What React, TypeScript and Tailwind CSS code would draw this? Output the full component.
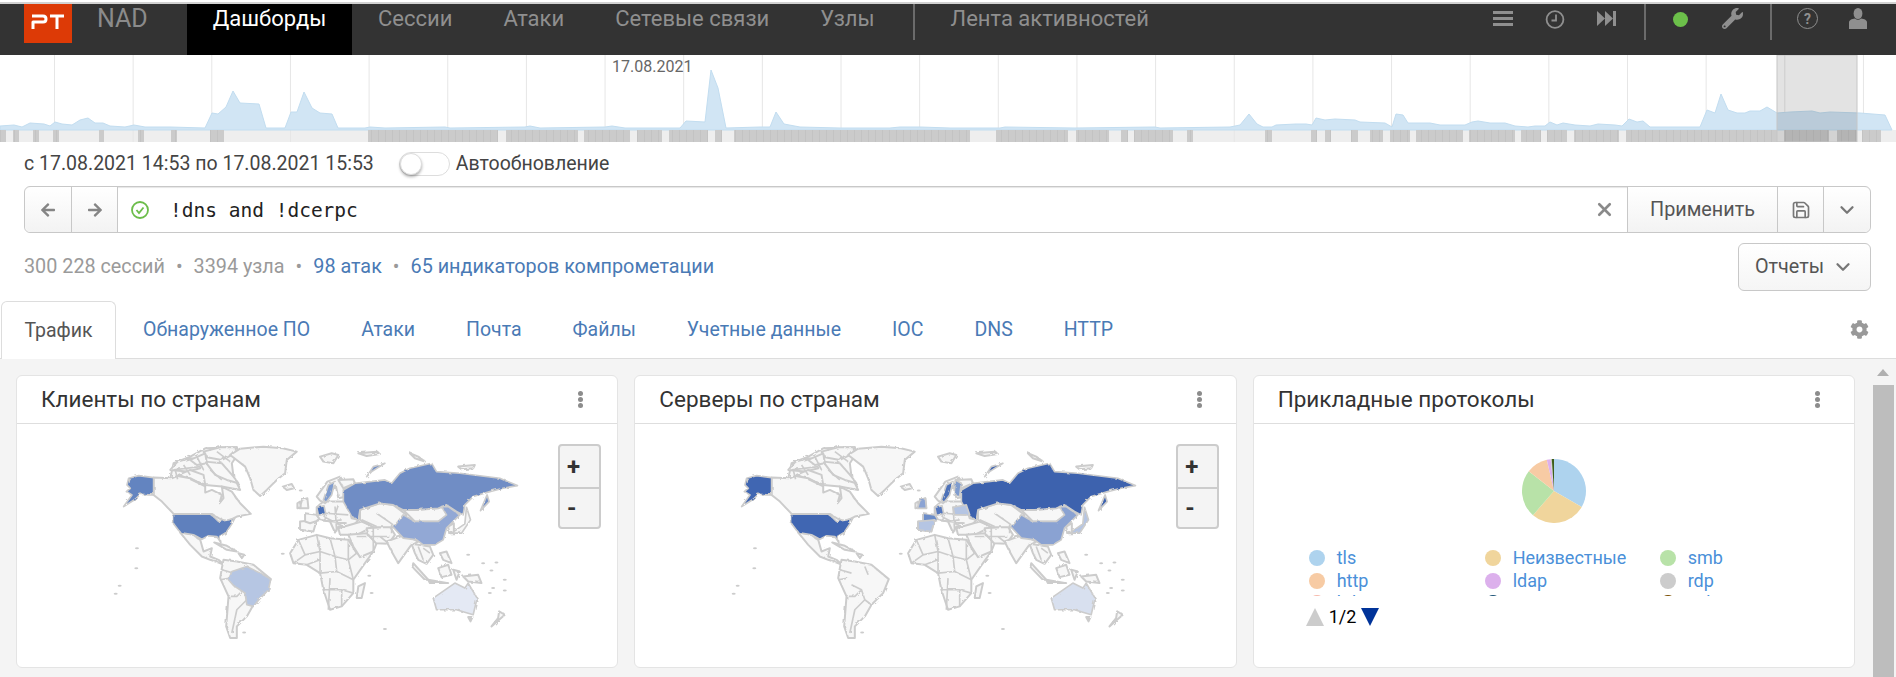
import React from 'react';
import { ChevronDown, Save, X } from 'lucide-react';
import { FaArrowLeft, FaArrowRight, FaCog, FaWrench } from 'react-icons/fa';

const chartPoints: [number, number][] = [
  [0,126],[14,125],[22,127],[30,123],[44,124],[50,126],[55,122],[62,124],[72,125],[80,120],[88,118],[95,123],[103,123],[110,126],[125,127],[134,125],[145,127],[170,127],[205,128],[212,113],[218,114],[226,107],[233,91],[240,103],[259,104],[266,128],[285,128],[291,112],[297,112],[304,92],[312,108],[320,113],[332,114],[338,128],[365,128],[370,127],[385,128],[445,127],[450,128],[525,127],[530,126],[540,128],[605,127],[612,126],[625,128],[680,128],[686,121],[705,122],[711,70],[718,88],[726,128],[760,127],[770,127],[776,112],[784,124],[800,127],[840,128],[890,128],[900,127],[920,127],[950,128],[1000,128],[1005,127],[1075,128],[1155,127],[1160,128],[1230,127],[1240,125],[1249,114],[1257,124],[1263,127],[1272,127],[1276,125],[1296,124],[1306,124],[1312,125],[1316,118],[1325,120],[1335,119],[1355,120],[1360,122],[1385,123],[1392,127],[1396,114],[1403,115],[1408,123],[1430,123],[1440,125],[1465,125],[1472,122],[1478,121],[1490,123],[1505,123],[1515,126],[1528,127],[1535,126],[1545,126],[1550,122],[1557,125],[1563,123],[1575,125],[1590,126],[1598,124],[1615,125],[1622,126],[1629,119],[1637,122],[1643,121],[1650,127],[1700,127],[1707,110],[1715,113],[1721,94],[1728,110],[1737,113],[1745,113],[1750,111],[1760,111],[1767,107],[1777,113],[1790,112],[1812,111],[1820,113],[1830,112],[1860,113],[1885,115],[1892,130],
];

const stripSegments: [number, number][] = [
  [0,6],[13,19],[33,39],[53,59],[99,104],[138,144],[171,177],[210,224],[368,498],[506,578],[584,630],[637,662],[669,708],[715,722],[734,970],[996,1068],[1076,1109],[1121,1128],[1134,1173],[1187,1193],[1265,1272],[1311,1317],[1325,1331],[1351,1358],[1370,1383],[1390,1410],[1416,1463],[1469,1515],[1521,1541],[1547,1567],[1574,1619],[1626,1777],[1784,1829],[1837,1857],[1862,1881],
];

const gridLines = Array.from({ length: 24 }, (_, i) => 54.5 + i * 78.65);

const navItems = ['Сессии', 'Атаки', 'Сетевые связи', 'Узлы'];
const tabs = ['Обнаруженное ПО', 'Атаки', 'Почта', 'Файлы', 'Учетные данные', 'IOC', 'DNS', 'HTTP'];

const land = [
  // canadian arctic, backing shape first so the islands read as one dense mass
  'M240,175 L250,130 L300,110 L345,85 L440,82 L445,100 L425,130 L430,170 L450,210 L395,200 L345,195 L300,175Z',
  'M240,150 L262,125 L300,115 L335,120 L330,145 L290,155Z',
  'M340,95 L390,82 L440,82 L420,108 L395,120 L350,112Z',
  'M345,125 L395,130 L430,170 L445,190 L410,180 L375,165Z',
  'M265,165 L300,150 L340,165 L345,195 L300,178Z',
  'M300,120 L345,100 L350,130 L320,135Z',
  // greenland, iceland
  'M420,105 L450,86 L520,80 L578,85 L620,95 L590,120 L585,160 L560,180 L530,210 L510,228 L490,210 L480,175 L465,140Z',
  'M578,200 L605,192 L612,205 L590,210Z',
  // canada
  'M190,173 L245,175 L262,168 L300,175 L320,185 L345,195 L345,218 L365,210 L395,225 L388,250 L400,235 L395,200 L425,215 L450,250 L482,282 L440,290 L410,305 L385,295 L365,282 L250,282 L215,245 L190,225Z',
  // mexico, central america
  'M270,338 L310,345 L330,360 L340,395 L365,385 L360,410 L385,420 L402,435 L385,428 L360,420 L335,410 L300,375Z',
  'M372,368 L410,378 L440,395 L410,390Z',
  'M445,400 L462,405 L455,415Z',
  // south america
  'M400,420 L440,425 L490,435 L542,478 L525,520 L490,555 L470,590 L440,620 L440,655 L420,655 L408,620 L415,530 L390,475 L395,445Z',
  // africa
  'M600,400 L625,360 L680,345 L720,355 L775,360 L800,400 L850,395 L825,430 L790,480 L790,520 L755,560 L720,570 L700,510 L690,460 L650,435 L610,430Z',
  'M805,500 L825,490 L815,535 L800,535Z',
  // europe
  'M630,305 L680,300 L670,335 L630,330Z',
  'M645,280 L680,285 L690,300 L660,310 L645,305Z',
  'M680,262 L700,245 L760,245 L775,260 L785,295 L805,300 L790,318 L745,320 L735,338 L720,305 L690,300 L680,285Z',
  'M628,265 L636,240 L652,235 L655,265Z',
  'M622,250 L630,245 L632,262 L622,265Z',
  'M680,230 L712,185 L750,170 L765,190 L760,232 L745,235 L738,200 L720,215 L705,250 L690,242Z',
  'M690,110 L725,100 L745,105 L730,130 L700,125Z',
  'M805,100 L860,95 L870,102 L830,108Z',
  'M745,180 L790,178 L795,190 L760,205Z',
  // arctic russia
  'M960,100 L985,110 L1005,125 L975,115Z',
  'M1105,140 L1155,135 L1150,145 L1115,148Z',
  // turkey, arabia, iran, central asia
  'M745,325 L815,305 L850,320 L800,345 L750,345Z',
  'M775,345 L830,340 L860,370 L850,395 L810,412 L790,380Z',
  'M830,325 L900,320 L915,345 L895,372 L858,370 L835,345Z',
  'M810,270 L870,250 L910,255 L950,285 L912,322 L850,322 L810,300Z',
  'M940,270 L980,270 L1045,265 L1070,255 L1075,285 L1045,305 L975,305Z',
  // south asia, south-east asia
  'M890,365 L945,345 L985,365 L962,378 L925,430 L905,395Z',
  'M965,372 L1020,380 L1030,405 L1010,432 L985,420 L975,400Z',
  'M970,430 L1015,480 L1005,480 L968,442Z',
  'M1015,480 L1075,490 L1020,490Z',
  'M1045,445 L1075,435 L1085,465 L1055,472Z',
  'M1090,450 L1110,455 L1100,480Z',
  'M1050,400 L1070,395 L1085,430 L1060,420Z',
  'M1120,470 L1165,465 L1175,490 L1135,485Z',
  // korea
  'M1075,320 L1092,310 L1092,340 L1078,340Z',
  // oceania
  'M1135,592 L1148,592 L1142,605Z',
  'M1205,620 L1245,585 L1228,575 L1225,595Z',
];

const borders = [
  // south america
  'M395,450 L430,460 M420,475 L390,480 M430,495 L460,510 L440,530 L420,530 M460,510 L470,540 L440,570 L425,640 M470,540 L490,555 M470,440 L480,465',
  // africa
  'M625,360 L645,405 L610,430 M680,345 L690,395 L645,405 M720,355 L735,410 L690,395 M775,360 L775,420 L735,410 M800,400 L775,420 L790,480 M690,460 L740,455 L735,410 M740,455 L790,480 M700,510 L755,510 L790,520 M720,475 L715,570 M755,510 L755,560 M650,435 L690,420 M690,395 L690,460',
  // europe
  'M700,258 L705,300 M735,260 L740,335 M705,280 L775,285 M680,300 L770,310 M720,305 L755,300 M700,290 L760,320 M735,285 L745,255',
  // middle east, central asia
  'M850,320 L850,395 M800,350 L900,350 M815,300 L860,320 M860,280 L910,315 M905,340 L905,315 M870,350 L895,370',
  // se asia
  'M985,380 L1000,420 M1000,385 L1020,400',
  // canada
  'M280,135 L300,165 M360,150 L395,180 M400,110 L385,130 M262,178 L255,150 M300,178 L345,200 M320,110 L340,150 M380,95 L420,125 M250,150 L330,140',
];

const regions: Record<string, string> = {
  alaska: 'M190,173 L145,167 L115,175 L110,195 L120,205 L108,215 L125,225 L100,260 L135,238 L150,223 L175,225 L190,225Z',
  usa: 'M250,283 L360,283 L375,295 L385,305 L415,300 L434,295 L425,312 L408,338 L388,350 L392,368 L380,350 L355,348 L335,358 L310,345 L270,338 L250,312Z',
  brazil: 'M425,455 L470,440 L510,460 L542,478 L535,510 L510,535 L490,560 L470,555 L465,520 L430,497 L415,480Z',
  russia: 'M760,245 L760,210 L795,190 L840,185 L885,180 L905,190 L930,160 L960,145 L1025,130 L1040,155 L1110,160 L1230,175 L1283,197 L1240,205 L1200,215 L1150,230 L1125,255 L1120,285 L1100,275 L1070,255 L1045,265 L980,270 L940,270 L910,255 L870,250 L810,270 L805,300 L785,290Z',
  novaya: 'M830,170 L850,140 L885,130 L845,155Z',
  china: 'M910,322 L940,285 L975,305 L1045,305 L1070,285 L1055,260 L1075,260 L1110,285 L1085,310 L1070,325 L1060,360 L1035,375 L1000,375 L980,360 L940,355Z',
  australia: 'M1030,535 L1095,490 L1125,505 L1135,490 L1162,535 L1150,585 L1100,570 L1040,570Z',
  sakhalin: 'M1172,272 L1192,225 L1198,245Z',
  sweden: 'M715,195 L735,185 L725,225 L708,248 L700,240Z',
  finland: 'M742,180 L760,190 L755,228 L738,225Z',
  germany: 'M680,262 L702,258 L707,282 L685,286Z',
  france: 'M645,280 L680,285 L690,300 L660,310 L645,305Z',
  uk: 'M628,265 L636,240 L652,235 L655,265Z',
  spain: 'M630,305 L680,300 L670,335 L630,330Z',
  ukraine: 'M735,262 L775,255 L785,285 L740,285Z',
  japan: 'M1085,340 L1125,312 L1130,262 L1142,300 L1115,340Z',
};

const islets = [[140,385],[138,445],[88,498],[76,522],[578,402],[845,520],[885,628],[462,638],[1135,405],[1180,430],[1220,428],[1205,452],[1245,480],[1210,505],[1200,520],[1245,512],[632,212],[838,468]];

const WorldMap: React.FC<{ id: string; fills: Record<string, string> }> = ({ id, fills }) => (
  <svg viewBox="0 30 1560 700" width={520} height={233} className="block">
    <defs>
      <filter id={id} filterUnits="userSpaceOnUse" x="0" y="0" width="1560" height="750" colorInterpolationFilters="sRGB">
        <feTurbulence type="fractalNoise" baseFrequency="0.07" numOctaves="2" seed="4" />
        <feDisplacementMap in="SourceGraphic" scale="8" />
      </filter>
    </defs>
    <g stroke="#cccccc" strokeWidth={6} strokeLinejoin="round" fill="#f7f7f7" filter={`url(#${id})`}>
      {land.map((d, i) => <path key={i} d={d} />)}
      <path d={borders.join(' ')} fill="none" strokeWidth={5} />
      {Object.keys(fills).map((r) => <path key={r} d={regions[r]} fill={fills[r]} strokeWidth={5} />)}
    </g>
    <g fill="#cccccc">
      {islets.map(([x, y], i) => <ellipse key={i} cx={x} cy={y} rx={6} ry={3} />)}
    </g>
  </svg>
);

const polar = (deg: number, r: number) => {
  const a = ((deg - 90) * Math.PI) / 180;
  return [32 + r * Math.cos(a), 32 + r * Math.sin(a)];
};

const slices: [number, number, string][] = [
  [0, 120, '#aed3ee'],
  [120, 221, '#f0d59c'],
  [221, 308, '#b8e2a8'],
  [308, 347, '#f7cba4'],
  [347, 354, '#dcb0ec'],
  [354, 356, '#cccccc'],
  [356, 360, '#3f5e1a'],
];

const PieChart = () => (
  <svg width={64} height={64} viewBox="0 0 64 64">
    {slices.map(([from, to, color]) => {
      const [x1, y1] = polar(from, 32);
      const [x2, y2] = polar(to, 32);
      return <path key={from} d={`M32,32 L${x1},${y1} A32,32 0 0 1 ${x2},${y2}Z`} fill={color} />;
    })}
  </svg>
);

const legend: [string, string][] = [
  ['tls', '#aed3ee'], ['Неизвестные', '#f0d59c'], ['smb', '#b8e2a8'],
  ['http', '#f7cba4'], ['ldap', '#dcb0ec'], ['rdp', '#cccccc'],
  ['krb5', '#f7b9ab'], ['ms-rpc-tcp', '#1a5276'], ['ssh', '#7a4d00'],
];

const Card: React.FC<{ title: string; children: React.ReactNode }> = ({ title, children }) => (
  <div className="relative h-[293px] overflow-hidden rounded-md border border-[#e4e4e4] bg-white">
    <div className="flex h-[48px] items-center justify-between border-b border-[#dedede] pl-[24px] pr-[34px]">
      <span className="text-[22.5px] text-[#333333]">{title}</span>
      <span className="flex flex-col gap-[1px]">
        <i className="block h-[5px] w-[5px] rounded-full bg-[#8c8c8c]" />
        <i className="block h-[5px] w-[5px] rounded-full bg-[#8c8c8c]" />
        <i className="block h-[5px] w-[5px] rounded-full bg-[#8c8c8c]" />
      </span>
    </div>
    {children}
  </div>
);

const ZoomButtons = () => (
  <div className="absolute left-[541px] top-[68px] flex h-[85px] w-[43px] flex-col rounded border-2 border-[#cccccc] bg-[#f4f4f4] text-[#333333]">
    <span className="flex h-[41px] items-center pl-[7px] text-[24px] font-bold leading-none">+</span>
    <span className="flex flex-1 items-center border-t-2 border-[#cccccc] pl-[7px] text-[24px] font-bold leading-none">-</span>
  </div>
);

const Sep: React.FC<{ className: string }> = ({ className }) => <span className={`h-[36px] w-[2px] bg-[#6b6b6b] ${className}`} />;

export default function App() {
  const area = `M0,130 ${chartPoints.map(([x, y]) => `L${x},${y}`).join(' ')} L1892,130Z`;

  return (
    <div className="flex h-[677px] w-[1896px] flex-col overflow-hidden bg-white font-['Roboto',sans-serif]">
      <div className="h-[4px] border-b-2 border-[#d2d2d2] bg-white" />

      <header className="flex h-[51px] shrink-0 items-start bg-[#333333]">
        <div className="ml-[24px] flex h-[39px] w-[48px] items-center justify-center bg-[#dd3a06] pb-[4px]">
          <svg width="34" height="16" viewBox="0 0 34 16" fill="none" stroke="#ffffff" strokeWidth="3" strokeLinejoin="round">
            <path d="M2,15 V8 H12 Q15,8 15,5 Q15,2 12,2 H1" />
            <path d="M19,2 H33 M26,2 V15" />
          </svg>
        </div>
        <span className="ml-[25px] w-[90px] text-[25px] leading-[30px] text-[#8b8b8b]">NAD</span>
        <span className="flex h-[51px] w-[165px] justify-center bg-black text-[22px] leading-[30px] text-white">Дашборды</span>
        <nav className="flex items-start pl-[26px] text-[22px] leading-[30px] text-[#8f8f8f]">
          <div className="flex gap-[51px]">
            {navItems.map((item) => <span key={item}>{item}</span>)}
          </div>
          <Sep className="ml-[38px]" />
          <span className="ml-[36px]">Лента активностей</span>
        </nav>
        <div className="ml-auto flex items-start text-[#8f8f8f]">
          <span className="mt-[7px] flex w-[20px] flex-col gap-[3px]">
            <i className="block h-[3px] bg-[#8f8f8f]" />
            <i className="block h-[3px] bg-[#8f8f8f]" />
            <i className="block h-[3px] bg-[#8f8f8f]" />
          </span>
          <svg className="ml-[32px] mt-[6px]" width="20" height="19" viewBox="0 0 20 19" fill="none" stroke="#8f8f8f" strokeWidth="1.8">
            <circle cx="10" cy="9.5" r="8.4" />
            <path d="M11,4.5 V10.5 H6.5" />
          </svg>
          <svg className="ml-[32px] mt-[7px]" width="19" height="15" viewBox="0 0 19 15" fill="#8f8f8f">
            <path d="M0,0 L8,7.5 L0,15Z M8,0 L16,7.5 L8,15Z" />
            <rect x="16" y="0" width="3" height="15" />
          </svg>
          <Sep className="ml-[28px]" />
          <span className="ml-[27px] mt-[8px] h-[15px] w-[15px] rounded-full bg-[#6cc04a]" />
          <FaWrench className="ml-[34px] mt-[4px]" size={21} />
          <Sep className="ml-[27px]" />
          <span className="ml-[25px] mt-[4px] flex h-[21px] w-[21px] items-center justify-center rounded-full border-[1.5px] border-[#8f8f8f] text-[14px] font-bold leading-none">?</span>
          <svg className="ml-[31px] mr-[29px] mt-[4px]" width="18" height="21" viewBox="0 0 18 21" fill="#8f8f8f">
            <ellipse cx="9" cy="5.5" rx="4.4" ry="5.5" />
            <path d="M0,21 V14.5 Q0,12 3.5,11 L6,10.5 Q9,13 12,10.5 L14.5,11 Q18,12 18,14.5 V21Z" />
          </svg>
        </div>
      </header>

      <div className="relative h-[87px] shrink-0">
        <svg width={1896} height={87} viewBox="0 55 1896 87" className="block">
          <defs>
            <pattern id="strip" patternUnits="userSpaceOnUse" width="7" height="12" x="0" y="130">
              <rect width="7" height="12" fill="#cbcbcb" />
              <rect width="1" height="12" fill="#c3c3c3" />
            </pattern>
          </defs>
          <rect x={0} y={130} width={1896} height={12} fill="#eeeeee" />
          {gridLines.map((x) => <line key={x} x1={x} x2={x} y1={55} y2={142} stroke="#e6e6e6" strokeWidth={1} />)}
          <path d={area} fill="#d1e5f4" stroke="#c2ddf0" strokeWidth={1} />
          {stripSegments.map(([a, b]) => <rect key={a} x={a} y={130} width={b - a} height={12} fill="url(#strip)" />)}
          <rect x={1777} y={55} width={80} height={87} fill="#000000" fillOpacity={0.11} stroke="#c6c6c6" />
        </svg>
        <span className="absolute left-[612px] top-0 text-[16px] leading-[24px] text-[#666666]">17.08.2021</span>
      </div>

      <div className="flex h-[44px] shrink-0 items-center pl-[24px] text-[19.5px] text-[#444444]">
        <span>с 17.08.2021 14:53 по 17.08.2021 15:53</span>
        <span className="ml-[25px] flex h-[24px] w-[51px] items-center rounded-full border border-[#dddddd]">
          <i className="block h-[22px] w-[22px] rounded-full border border-[#dddddd] bg-white shadow-[0_2px_3px_rgba(0,0,0,0.3)]" />
        </span>
        <span className="ml-[6px]">Автообновление</span>
      </div>

      <div className="ml-[24px] mr-[25px] flex h-[47px] shrink-0 items-stretch rounded-md border border-[#c8c8c8] shadow-[inset_0_1px_1px_rgba(0,0,0,0.1)]">
        <span className="flex w-[47px] items-center justify-center rounded-l-md border-r border-[#c8c8c8] bg-gradient-to-b from-white to-[#f3f3f3] text-[#858585]"><FaArrowLeft size={16} /></span>
        <span className="flex w-[46px] items-center justify-center border-r border-[#c8c8c8] bg-gradient-to-b from-white to-[#f3f3f3] text-[#858585]"><FaArrowRight size={16} /></span>
        <svg className="ml-[12px] self-center" width="20" height="20" viewBox="0 0 20 20" fill="none" stroke="#6cbd4a" strokeWidth="1.8">
          <circle cx="10" cy="10" r="8" />
          <path d="M6.5,10 L9,13 L13.5,7.5" />
        </svg>
        <span className="ml-[20px] mt-[2px] self-center font-['DejaVu_Sans_Mono',monospace] text-[19.5px] text-[#222222]">!dns and !dcerpc</span>
        <X className="ml-auto mr-[12px] self-center text-[#8a8a8a]" size={21} strokeWidth={3} />
        <span className="flex w-[150px] items-center justify-center border-l border-[#c8c8c8] bg-gradient-to-b from-white to-[#f3f3f3] text-[19.8px] text-[#555555]">Применить</span>
        <span className="flex w-[46px] items-center justify-center border-l border-[#c8c8c8] bg-gradient-to-b from-white to-[#f3f3f3] text-[#777777]"><Save size={20} strokeWidth={2} /></span>
        <span className="flex w-[47px] items-center justify-center rounded-r-md border-l border-[#c8c8c8] bg-gradient-to-b from-white to-[#f3f3f3] text-[#777777]"><ChevronDown size={22} strokeWidth={2.5} /></span>
      </div>

      <div className="mt-[10px] flex h-[48px] shrink-0 items-center justify-between pl-[24px] pr-[25px] text-[19.8px]">
        <div className="flex items-center">
          <span className="text-[#9a9a9a]">300 228 сессий</span>
          <span className="mx-[11px] text-[#9a9a9a]">•</span>
          <span className="text-[#9a9a9a]">3394 узла</span>
          <span className="mx-[11px] text-[#9a9a9a]">•</span>
          <span className="text-[#4a7ab5]">98 атак</span>
          <span className="mx-[11px] text-[#9a9a9a]">•</span>
          <span className="text-[#4a7ab5]">65 индикаторов компрометации</span>
        </div>
        <span className="flex h-[48px] w-[133px] items-center justify-center gap-[8px] rounded-md border border-[#c8c8c8] bg-gradient-to-b from-white to-[#f5f5f5] text-[19.8px] text-[#555555]">
          Отчеты <ChevronDown size={22} strokeWidth={2.5} className="text-[#777777]" />
        </span>
      </div>

      <div className="mt-[10px] flex h-[58px] shrink-0 items-stretch border-b border-[#dddddd] text-[19.5px] text-[#4a7ab5]">
        <span className="-mb-px ml-px flex w-[115px] items-center justify-center rounded-t-md border border-b-0 border-[#dddddd] bg-white text-[#555555]">Трафик</span>
        <div className="flex items-center gap-[51px] pl-[27px]">
          {tabs.map((t) => <span key={t}>{t}</span>)}
        </div>
        <span className="ml-auto flex items-center pr-[27px] text-[#999999]"><FaCog size={19} /></span>
      </div>

      <div className="flex min-h-0 flex-1 bg-[#f4f4f4]">
        <main className="grid flex-1 grid-cols-3 content-start gap-[16px] pl-[16px] pr-[15px] pt-[16px]">
          <Card title="Клиенты по странам">
            <div className="pl-[73px] pt-[6px]">
              <WorldMap id="rough-a" fills={{ alaska: '#6384c0', usa: '#5f80bd', brazil: '#b6c6e3', russia: '#708dc5', novaya: '#708dc5', china: '#92a8d5', australia: '#e4e9f4', sakhalin: '#708dc5', sweden: '#7f9ccf', germany: '#4a70b8', japan: '#f7f7f7' }} />
            </div>
            <ZoomButtons />
          </Card>
          <Card title="Серверы по странам">
            <div className="pl-[73px] pt-[6px]">
              <WorldMap id="rough-b" fills={{ alaska: '#4066b2', usa: '#4066b2', russia: '#3d62ae', novaya: '#3d62ae', china: '#8aa2d2', australia: '#d8e0ef', sakhalin: '#3d62ae', sweden: '#4d71b8', finland: '#7f9ccf', germany: '#5578bf', france: '#6b8cc8', uk: '#8ca4d4', spain: '#b5c5e3', ukraine: '#b5c5e3', japan: '#b5c5e3' }} />
            </div>
            <ZoomButtons />
          </Card>
          <Card title="Прикладные протоколы">
            <div className="flex justify-center pt-[35px]">
              <div className="ml-[1px]"><PieChart /></div>
            </div>
            <div className="ml-[55px] mt-[24px] grid h-[49px] w-[530px] grid-cols-[176px_175px_1fr] overflow-hidden text-[18px] leading-[22px] text-[#4a90d9]">
              {legend.map(([name, color]) => (
                <div key={name} className="flex h-[22.5px] items-center">
                  <i className="block h-[16px] w-[16px] rounded-full" style={{ backgroundColor: color }} />
                  <span className="ml-[12px]">{name}</span>
                </div>
              ))}
            </div>
            <div className="ml-[52px] mt-[10px] flex items-center text-[18px] leading-[22px] text-black">
              <svg width="18" height="18" viewBox="0 0 18 18"><path d="M9,0 L18,18 H0Z" fill="#cccccc" /></svg>
              <span className="mx-[5px]">1/2</span>
              <svg width="18" height="18" viewBox="0 0 18 18"><path d="M0,0 H18 L9,18Z" fill="#003399" /></svg>
            </div>
          </Card>
        </main>
        <aside className="flex w-[26px] flex-col items-center">
          <svg className="mt-[10px]" width="12" height="7" viewBox="0 0 12 7"><path d="M6,0 L12,7 H0Z" fill="#b0b0b0" /></svg>
          <div className="mt-[9px] w-[21px] flex-1 bg-[#bdbdbd]" />
        </aside>
      </div>
    </div>
  );
}
